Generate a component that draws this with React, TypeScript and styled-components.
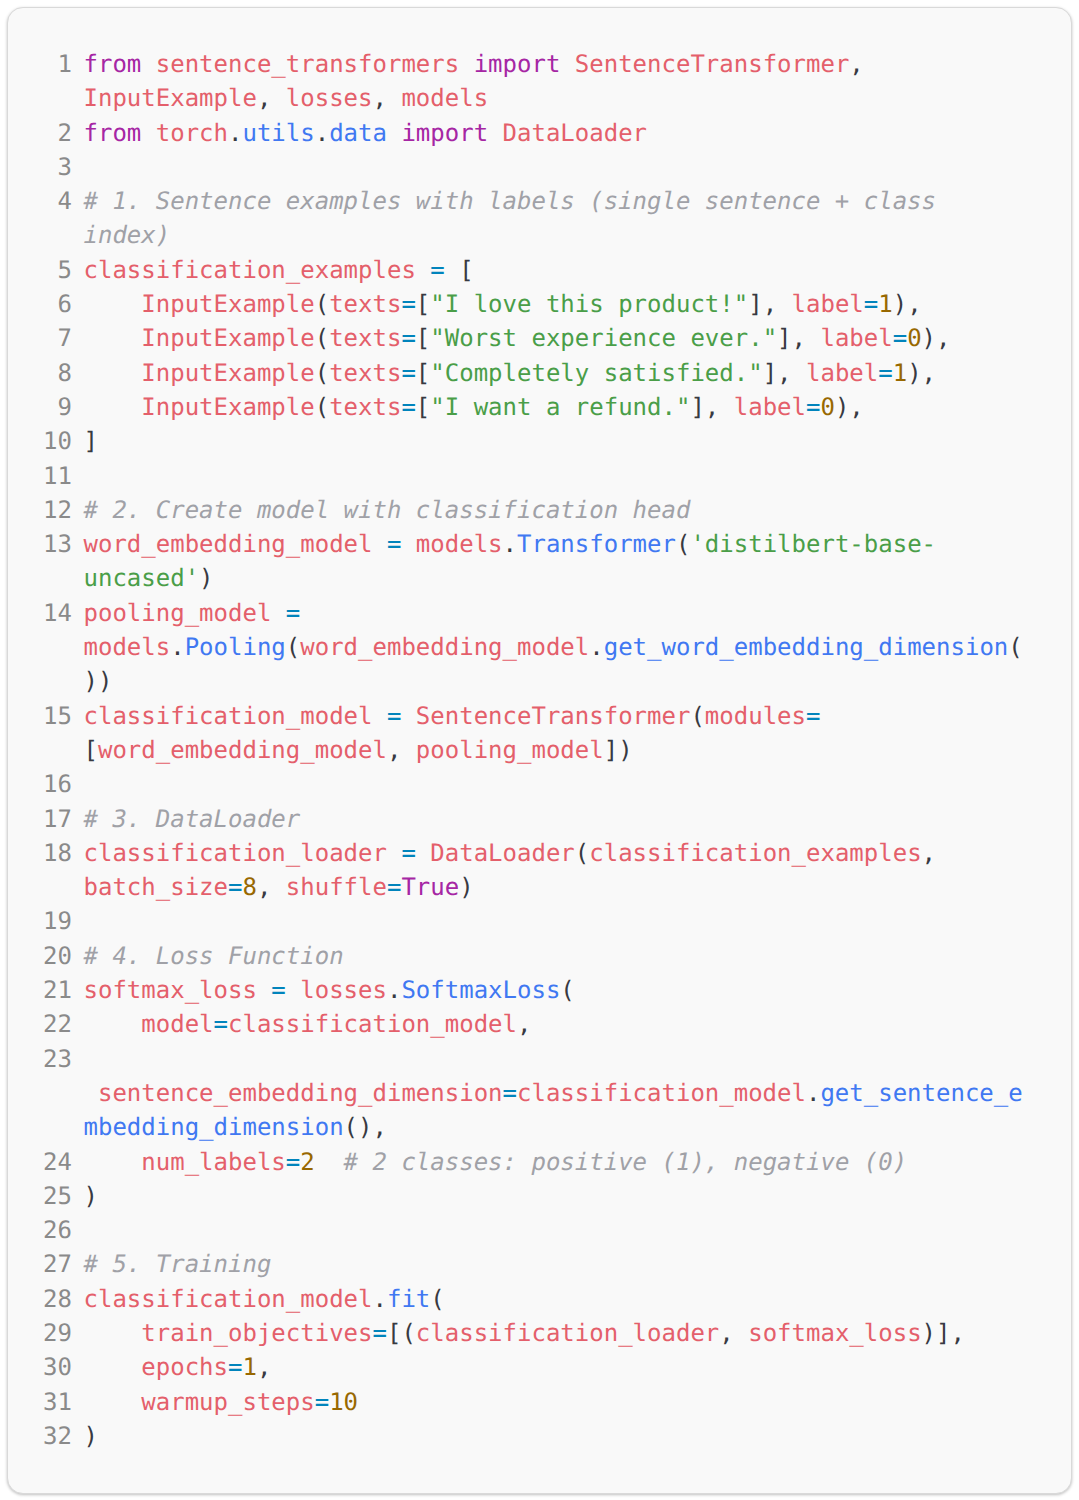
import React from "react";
import styled, { createGlobalStyle } from "styled-components";

const GlobalStyle = createGlobalStyle`
  html, body { margin: 0; padding: 0; background: #ffffff; }
  body { font-family: "DejaVu Sans Mono", "Liberation Mono", monospace; }
`;

type Kind = "kw" | "id" | "op" | "num" | "str" | "fn" | "cm" | "p";
type Tok = [Kind, string];
type Row = Tok[];

const palette: Record<Kind, string> = {
  kw: "#a626a4",
  id: "#e45f6b",
  op: "#0184bc",
  num: "#986801",
  str: "#4a9e48",
  fn: "#4078f2",
  cm: "#a0a1a7",
  p: "#383a42",
};

const Card = styled.div`
  margin: 7px;
  padding: 39px 30px 40px 35px;
  background: #f9f9f9;
  border: 1px solid #d9d9d9;
  border-radius: 16px;
  box-shadow: 0 1px 3px rgba(0, 0, 0, 0.25);
`;

const Line = styled.div`
  display: flex;
  gap: 11.5px;
  font-family: "DejaVu Sans Mono", "Liberation Mono", monospace;
  font-size: 24px;
  line-height: 34.3px;
  text-rendering: geometricPrecision;
`;

const Num = styled.span`
  flex: 0 0 29px;
  color: #8a8a8a;
  text-align: right;
`;

const Code = styled.div`
  white-space: pre;
`;

const CodeRow = styled.div``;

const Tk = styled.span<{ $k: Kind }>`
  color: ${(p) => palette[p.$k]};
`;

const Comment = styled.span`
  color: ${palette.cm};
  font-style: italic;
`;

const kw = (s: string): Tok => ["kw", s];
const id = (s: string): Tok => ["id", s];
const op = (s: string): Tok => ["op", s];
const num = (s: string): Tok => ["num", s];
const str = (s: string): Tok => ["str", s];
const fn = (s: string): Tok => ["fn", s];
const cm = (s: string): Tok => ["cm", s];
const p = (s: string): Tok => ["p", s];
const blank: Row = [p(" ")];

const example = (text: string, label: string): Row[] => [
  [
    p("    "),
    id("InputExample"),
    p("("),
    id("texts"),
    op("="),
    p("["),
    str(`"${text}"`),
    p("], "),
    id("label"),
    op("="),
    num(label),
    p("),"),
  ],
];

const lines: Row[][] = [
  [
    [kw("from"), p(" "), id("sentence_transformers"), p(" "), kw("import"), p(" "), id("SentenceTransformer"), p(",")],
    [id("InputExample"), p(", "), id("losses"), p(", "), id("models")],
  ],
  [[kw("from"), p(" "), id("torch"), p("."), fn("utils"), p("."), fn("data"), p(" "), kw("import"), p(" "), id("DataLoader")]],
  [blank],
  [
    [cm("# 1. Sentence examples with labels (single sentence + class")],
    [cm("index)")],
  ],
  [[id("classification_examples"), op(" = "), p("[")]],
  example("I love this product!", "1"),
  example("Worst experience ever.", "0"),
  example("Completely satisfied.", "1"),
  example("I want a refund.", "0"),
  [[p("]")]],
  [blank],
  [[cm("# 2. Create model with classification head")]],
  [
    [id("word_embedding_model"), op(" = "), id("models"), p("."), fn("Transformer"), p("("), str("'distilbert-base-")],
    [str("uncased'"), p(")")],
  ],
  [
    [id("pooling_model"), op(" =")],
    [id("models"), p("."), fn("Pooling"), p("("), id("word_embedding_model"), p("."), fn("get_word_embedding_dimension"), p("(")],
    [p("))")],
  ],
  [
    [id("classification_model"), op(" = "), id("SentenceTransformer"), p("("), id("modules"), op("=")],
    [p("["), id("word_embedding_model"), p(", "), id("pooling_model"), p("])")],
  ],
  [blank],
  [[cm("# 3. DataLoader")]],
  [
    [id("classification_loader"), op(" = "), id("DataLoader"), p("("), id("classification_examples"), p(",")],
    [id("batch_size"), op("="), num("8"), p(", "), id("shuffle"), op("="), kw("True"), p(")")],
  ],
  [blank],
  [[cm("# 4. Loss Function")]],
  [[id("softmax_loss"), op(" = "), id("losses"), p("."), fn("SoftmaxLoss"), p("(")]],
  [[p("    "), id("model"), op("="), id("classification_model"), p(",")]],
  [
    blank,
    [p(" "), id("sentence_embedding_dimension"), op("="), id("classification_model"), p("."), fn("get_sentence_e")],
    [fn("mbedding_dimension"), p("(),")],
  ],
  [[p("    "), id("num_labels"), op("="), num("2"), p("  "), cm("# 2 classes: positive (1), negative (0)")]],
  [[p(")")]],
  [blank],
  [[cm("# 5. Training")]],
  [[id("classification_model"), p("."), fn("fit"), p("(")]],
  [[p("    "), id("train_objectives"), op("="), p("[("), id("classification_loader"), p(", "), id("softmax_loss"), p(")],")]],
  [[p("    "), id("epochs"), op("="), num("1"), p(",")]],
  [[p("    "), id("warmup_steps"), op("="), num("10")]],
  [[p(")")]],
];

export default function App() {
  return (
    <>
      <GlobalStyle />
      <Card>
        {lines.map((rows, i) => (
          <Line key={i}>
            <Num>{i + 1}</Num>
            <Code>
              {rows.map((row, j) => (
                <CodeRow key={j}>
                  {row.map(([k, s], n) =>
                    k === "cm" ? (
                      <Comment key={n}>{s}</Comment>
                    ) : (
                      <Tk key={n} $k={k}>
                        {s}
                      </Tk>
                    )
                  )}
                </CodeRow>
              ))}
            </Code>
          </Line>
        ))}
      </Card>
    </>
  );
}
